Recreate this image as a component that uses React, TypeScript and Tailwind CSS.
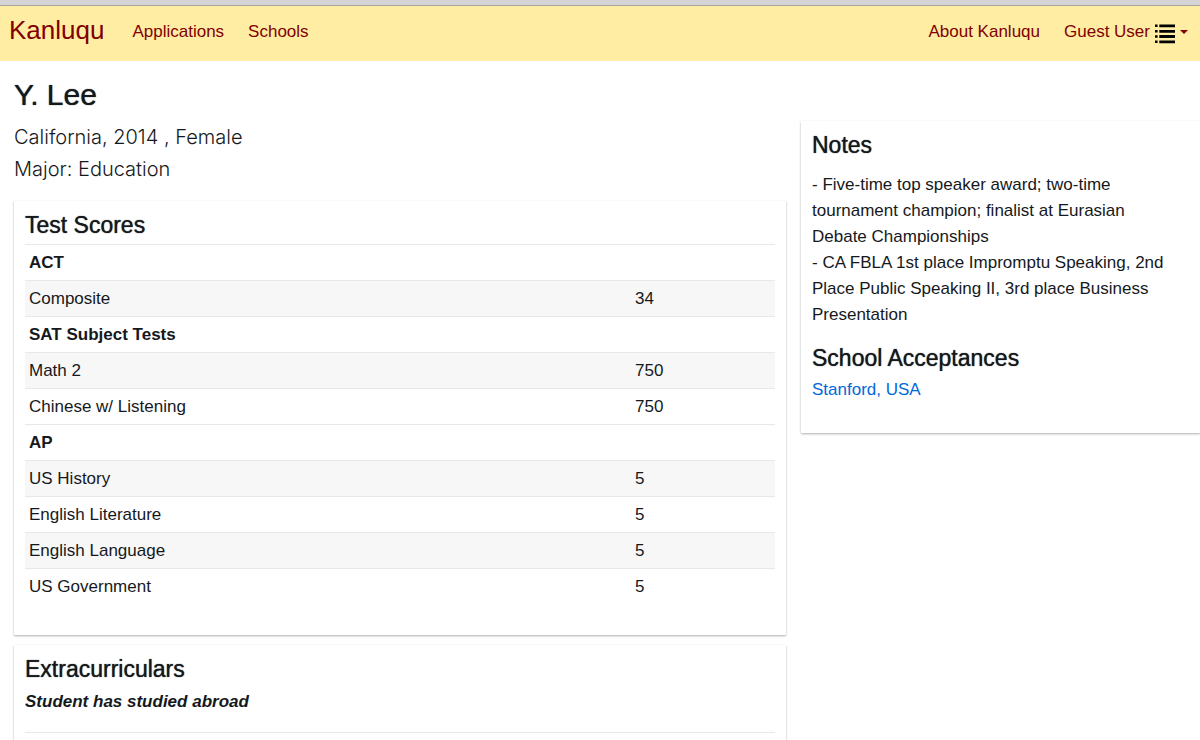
import type { ReactNode } from 'react';

type Row = { label: string; score?: string };

const rows: Row[] = [
  { label: 'ACT' },
  { label: 'Composite', score: '34' },
  { label: 'SAT Subject Tests' },
  { label: 'Math 2', score: '750' },
  { label: 'Chinese w/ Listening', score: '750' },
  { label: 'AP' },
  { label: 'US History', score: '5' },
  { label: 'English Literature', score: '5' },
  { label: 'English Language', score: '5' },
  { label: 'US Government', score: '5' },
];

const shaded = new Set(['Composite', 'Math 2', 'US History', 'English Language']);

function ListIcon() {
  return (
    <svg className="mt-1" width="20" height="20" viewBox="0 0 20 20" fill="#000" aria-hidden="true">
      <path d="M0 .5h2.6v2.5H0zM4.3.4H20v2.8H4.3zM0 6h2.6v2.5H0zM4.3 5.9H20v2.8H4.3zM0 11.2h2.6v2.5H0zM4.3 11.1H20v2.8H4.3zM0 16.5h2.6V19H0zM4.3 16.4H20v2.8H4.3z" />
    </svg>
  );
}

function Card({ children }: { children: ReactNode }) {
  return (
    <section className="bg-white px-[11px] pt-[10px] pb-[30px] shadow-[0_1px_2px_rgba(0,0,0,0.32)]">
      {children}
    </section>
  );
}

function Heading({ children }: { children: ReactNode }) {
  return (
    <h2 className="text-[23px] leading-7 [text-shadow:0_0_1px_#212529]">{children}</h2>
  );
}

export default function App() {
  return (
    <div className="min-h-screen overflow-x-hidden bg-white font-['Liberation_Sans',sans-serif] text-[17px] text-[#16191c]">
      <div className="h-[6px] border-b border-[#a9a5a0] bg-[#d5d5d5]" />
      <nav className="flex h-[55px] items-center bg-[#ffeda4] pr-3 pb-1 pl-[9px] text-[#800000]">
        <a href="#" className="mr-7 pb-1 text-[26px] leading-8">Kanluqu</a>
        <div className="flex gap-6">
          <a href="#">Applications</a>
          <a href="#">Schools</a>
        </div>
        <div className="ml-auto flex items-center gap-6">
          <a href="#">About Kanluqu</a>
          <button type="button" className="flex items-center gap-[5px]">
            Guest User
            <ListIcon />
            <svg width="8" height="4" viewBox="0 0 8 4" fill="currentColor" aria-hidden="true">
              <path d="M0 0h8L4 4z" />
            </svg>
          </button>
        </div>
      </nav>

      <main className="pl-[14px]">
        <h1 className="pt-4 pb-2 text-[30px] leading-9 [text-shadow:0_0_1px_#212529]">Y. Lee</h1>
        <div className="grid grid-cols-[772fr_399fr] items-start gap-[15px]">
          <div>
            <p className="mb-4 font-['Inter',sans-serif] text-[20px] leading-8 font-light">
              California, 2014 , Female
              <br />
              Major: Education
            </p>
            <div className="flex flex-col gap-[10px]">
              <Card>
                <Heading>Test Scores</Heading>
                <table className="mt-[5px] w-full table-fixed border-collapse text-left">
                  <colgroup>
                    <col />
                    <col className="w-36" />
                  </colgroup>
                  <tbody>
                    {rows.map((row) => (
                      <tr
                        key={row.label}
                        className={`h-9 border-t border-[#e6e8ea] ${shaded.has(row.label) ? 'bg-[#f7f7f7]' : ''}`}
                      >
                        {row.score ? (
                          <>
                            <td className="px-1">{row.label}</td>
                            <td className="px-1">{row.score}</td>
                          </>
                        ) : (
                          <th colSpan={2} className="px-1 font-bold">{row.label}</th>
                        )}
                      </tr>
                    ))}
                  </tbody>
                </table>
              </Card>
              <Card>
                <Heading>Extracurriculars</Heading>
                <p className="mt-[6px] font-bold italic">Student has studied abroad</p>
                <hr className="mt-[18px] border-[#e6e8ea]" />
              </Card>
            </div>
          </div>

          <Card>
            <Heading>Notes</Heading>
            <p className="mt-[13px] pr-2 leading-[26px]">
              - Five-time top speaker award; two-time tournament champion; finalist at Eurasian Debate Championships
              <br />
              - CA FBLA 1st place Impromptu Speaking, 2nd Place Public Speaking II, 3rd place Business Presentation
            </p>
            <div className="mt-4">
              <Heading>School Acceptances</Heading>
            </div>
            <a href="#" className="mt-[5px] block leading-[26px] text-[#0069d9]">Stanford, USA</a>
          </Card>
        </div>
      </main>
    </div>
  );
}
